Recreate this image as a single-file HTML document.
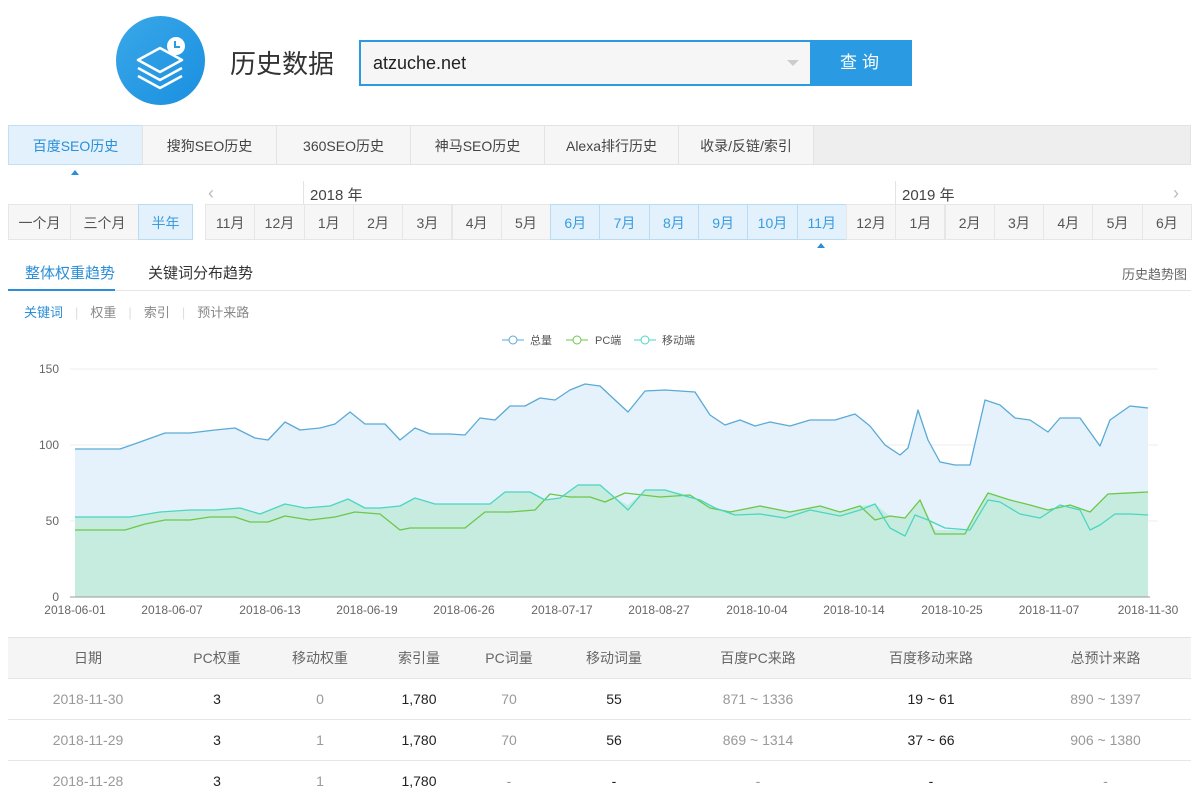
<!DOCTYPE html>
<html><head><meta charset="utf-8"><style>
*{margin:0;padding:0;box-sizing:border-box}
body{width:1200px;height:800px;overflow:hidden;background:#fff;font-family:"Liberation Sans","Noto Sans CJK SC",sans-serif;color:#555;position:relative}
.abs{position:absolute}
.logo{left:116px;top:16px;width:89px;height:89px;border-radius:50%;background:linear-gradient(135deg,#3aa8e8,#1a8fe0)}
.title{left:230px;top:44px;font-size:26px;color:#333}
.search{left:359px;top:40px;width:453px;height:46px;border:2px solid #2a9be3;background:#f6f6f6;font-size:18px;color:#222;padding:11px 0 0 12px}
.btn{left:812px;top:40px;width:100px;height:46px;background:#2a9be3;color:#fff;font-size:17px;text-align:center;line-height:46px;letter-spacing:5px}
.tabs{left:8px;top:125px;width:1183px;height:40px;background:#eee;border:1px solid #e3e3e3}
.tab{position:absolute;top:-1px;height:40px;line-height:40px;text-align:center;font-size:14px;color:#444;background:#f6f6f6;border:1px solid #e3e3e3}
.tab.on{background:#e2f1fb;color:#2a8fd8;border-color:#bfe0f5}
.cell{position:absolute;top:204px;height:36px;line-height:36px;text-align:center;font-size:14px;color:#555;background:#f6f6f6;border:1px solid #e6e6e6}
.cell.on{background:#e2f1fb;color:#3a9be0;border-color:#b9dcf3}
.tri{width:0;height:0;border-left:4px solid transparent;border-right:4px solid transparent;border-bottom:5px solid #2a8fd8}
table{position:absolute;left:8px;top:637px;width:1183px;border-collapse:collapse;font-size:14px}
td{height:41px;text-align:center;border-top:1px solid #e6e6e6;color:#999}
tr.h td{background:#f5f5f5;color:#666;border-top:1px solid #e3e3e3}
td.b{color:#222}
</style></head><body>
<div class="abs logo">
<svg width="89" height="89" viewBox="0 0 89 89"><g fill="none" stroke="#fff" stroke-width="2.5" stroke-linejoin="round"><path d="M22 44 L44 32 L66 44 L44 56 Z"/><path d="M22 52 L44 64 L66 52"/><path d="M22 60 L44 72 L66 60"/></g><circle cx="60" cy="30" r="9" fill="#fff"/><path d="M59 25 V31 H64" stroke="#2a9be3" stroke-width="2" fill="none"/></svg>
</div>
<div class="abs title">历史数据</div>
<div class="abs search">atzuche.net</div>
<div class="abs" style="left:787px;top:60px;border-left:6px solid transparent;border-right:6px solid transparent;border-top:6px solid #ccc"></div>
<div class="abs btn">查询</div>

<div class="abs tabs">
<div class="tab on" style="left:-1px;width:135px">百度SEO历史</div>
<div class="tab" style="left:133px;width:135px">搜狗SEO历史</div>
<div class="tab" style="left:267px;width:135px">360SEO历史</div>
<div class="tab" style="left:401px;width:135px">神马SEO历史</div>
<div class="tab" style="left:535px;width:135px">Alexa排行历史</div>
<div class="tab" style="left:669px;width:136px">收录/反链/索引</div>
</div>
<div class="abs tri" style="left:71px;top:170px"></div>

<div class="abs" style="left:208px;top:183px;font-size:18px;color:#bbb">‹</div>
<div class="abs" style="left:1173px;top:183px;font-size:18px;color:#bbb">›</div>
<div class="abs" style="left:303px;top:181px;width:1px;height:23px;background:#e3e3e3"></div>
<div class="abs" style="left:895px;top:181px;width:1px;height:23px;background:#e3e3e3"></div>
<div class="abs" style="left:310px;top:184px;font-size:15px;color:#444">2018 年</div>
<div class="abs" style="left:902px;top:184px;font-size:15px;color:#444">2019 年</div>

<div class="cell" style="left:8px;width:63px">一个月</div>
<div class="cell" style="left:70px;width:69px">三个月</div>
<div class="cell on" style="left:138px;width:55px">半年</div>
<div id="months"></div>
<div class="abs tri" style="left:817px;top:243px"></div>

<div class="abs" style="left:25px;top:262px;font-size:15px;color:#2a8fd8">整体权重趋势</div>
<div class="abs" style="left:148px;top:262px;font-size:15px;color:#333">关键词分布趋势</div>
<div class="abs" style="left:1122px;top:264px;font-size:13px;color:#666">历史趋势图</div>
<div class="abs" style="left:8px;top:290px;width:1183px;height:1px;background:#e6e6e6"></div>
<div class="abs" style="left:8px;top:289px;width:107px;height:2px;background:#2a8fd8"></div>
<div class="abs" style="left:24px;top:302px;font-size:13px;color:#888;word-spacing:0"><span style="color:#2a8fd8">关键词</span><span style="color:#ddd;margin:0 12px">|</span>权重<span style="color:#ddd;margin:0 12px">|</span>索引<span style="color:#ddd;margin:0 12px">|</span>预计来路</div>

<svg class="abs" style="left:0;top:320px" width="1200" height="300" viewBox="0 320 1200 300" font-family="Liberation Sans,Noto Sans CJK SC,sans-serif">
<g font-size="11" fill="#555">
<line x1="502" y1="340" x2="524" y2="340" stroke="#5aaad6"/><circle cx="513" cy="340" r="4" fill="#fff" stroke="#5aaad6"/><text x="530" y="344">总量</text>
<line x1="566" y1="340" x2="588" y2="340" stroke="#6cc74a"/><circle cx="577" cy="340" r="4" fill="#fff" stroke="#6cc74a"/><text x="595" y="344">PC端</text>
<line x1="634" y1="340" x2="656" y2="340" stroke="#4ad6c0"/><circle cx="645" cy="340" r="4" fill="#fff" stroke="#4ad6c0"/><text x="662" y="344">移动端</text>
</g>
<g stroke="#eee"><line x1="70" y1="369" x2="1158" y2="369"/><line x1="70" y1="445" x2="1158" y2="445"/><line x1="70" y1="521" x2="1158" y2="521"/></g>
<g font-size="12" fill="#666" text-anchor="end"><text x="59" y="373">150</text><text x="59" y="449">100</text><text x="59" y="525">50</text><text x="59" y="601">0</text></g>
<polygon fill="#e5f2fb" points="75,597 75,449 120,449 140,442 165,433 190,433 215,430 235,428 255,438 268,440 285,422 300,430 320,428 335,424 350,412 365,424 385,424 400,440 415,428 430,434 450,434 465,435 480,418 495,420 510,406 525,406 540,398 555,400 570,390 585,384 600,386 615,400 628,412 645,391 665,390 695,392 710,415 725,425 740,420 755,426 770,422 790,426 810,420 835,420 855,414 870,426 885,445 900,455 908,448 918,410 928,440 940,462 955,465 970,465 985,400 1000,405 1015,418 1030,420 1048,432 1060,418 1080,418 1090,432 1100,446 1110,420 1130,406 1148,408 1148,597"/>
<polygon fill="#c6ecdf" points="75,597 75,517 130,517 160,512 190,510 215,510 240,508 260,514 285,504 305,508 330,506 348,499 365,508 380,508 400,506 415,498 435,504 490,504 505,492 530,492 545,500 560,498 578,485 600,485 615,498 628,505 645,490 665,490 685,494 700,500 715,508 735,512 760,506 790,512 820,506 840,512 860,506 875,504 890,516 905,518 920,500 935,530 965,530 975,515 988,493 1010,500 1030,505 1048,510 1070,505 1090,512 1108,494 1148,492 1148,597"/>
<g fill="none" stroke-width="1.3" stroke-linejoin="round">
<polyline stroke="#5aaad6" points="75,449 120,449 140,442 165,433 190,433 215,430 235,428 255,438 268,440 285,422 300,430 320,428 335,424 350,412 365,424 385,424 400,440 415,428 430,434 450,434 465,435 480,418 495,420 510,406 525,406 540,398 555,400 570,390 585,384 600,386 615,400 628,412 645,391 665,390 695,392 710,415 725,425 740,420 755,426 770,422 790,426 810,420 835,420 855,414 870,426 885,445 900,455 908,448 918,410 928,440 940,462 955,465 970,465 985,400 1000,405 1015,418 1030,420 1048,432 1060,418 1080,418 1090,432 1100,446 1110,420 1130,406 1148,408"/>
<polyline stroke="#6cc74a" points="75,530 125,530 145,524 165,520 190,520 210,517 235,517 250,522 268,522 285,516 310,520 335,517 355,512 380,514 400,530 410,528 440,528 465,528 485,512 510,512 535,510 550,494 570,497 590,497 605,502 625,493 660,497 690,495 710,508 730,512 760,506 790,512 820,506 840,512 860,506 875,520 890,516 905,518 920,500 935,534 965,534 975,515 988,493 1010,500 1030,505 1048,510 1070,505 1090,512 1108,494 1148,492"/>
<polyline stroke="#4ad6c0" points="75,517 130,517 160,512 190,510 215,510 240,508 260,514 285,504 305,508 330,506 348,499 365,508 380,508 400,506 415,498 435,504 490,504 505,492 530,492 545,500 560,498 578,485 600,485 615,498 628,510 645,490 665,490 685,496 700,500 715,508 735,515 760,514 785,518 810,510 840,516 860,510 875,504 890,528 905,536 915,515 928,520 945,528 970,530 988,500 1000,502 1020,514 1040,518 1060,505 1080,510 1090,530 1100,525 1115,514 1130,514 1148,515"/>
</g>
<line x1="70" y1="597" x2="1150" y2="597" stroke="#999"/>
<g font-size="12" fill="#666" text-anchor="middle"><text x="75" y="614">2018-06-01</text><text x="172" y="614">2018-06-07</text><text x="270" y="614">2018-06-13</text><text x="367" y="614">2018-06-19</text><text x="464" y="614">2018-06-26</text><text x="562" y="614">2018-07-17</text><text x="659" y="614">2018-08-27</text><text x="757" y="614">2018-10-04</text><text x="854" y="614">2018-10-14</text><text x="952" y="614">2018-10-25</text><text x="1049" y="614">2018-11-07</text><text x="1148" y="614">2018-11-30</text></g>
</svg>

<table>
<tr class="h"><td style="width:160px">日期</td><td style="width:98px">PC权重</td><td style="width:108px">移动权重</td><td style="width:90px">索引量</td><td style="width:90px">PC词量</td><td style="width:120px">移动词量</td><td style="width:168px">百度PC来路</td><td style="width:178px">百度移动来路</td><td>总预计来路</td></tr>
<tr><td>2018-11-30</td><td class="b">3</td><td>0</td><td class="b">1,780</td><td>70</td><td class="b">55</td><td>871 ~ 1336</td><td class="b">19 ~ 61</td><td>890 ~ 1397</td></tr>
<tr><td>2018-11-29</td><td class="b">3</td><td>1</td><td class="b">1,780</td><td>70</td><td class="b">56</td><td>869 ~ 1314</td><td class="b">37 ~ 66</td><td>906 ~ 1380</td></tr>
<tr><td>2018-11-28</td><td class="b">3</td><td>1</td><td class="b">1,780</td><td>-</td><td class="b">-</td><td>-</td><td class="b">-</td><td>-</td></tr>
</table>
<script>
var m=["11月","12月","1月","2月","3月","4月","5月","6月","7月","8月","9月","10月","11月","12月","1月","2月","3月","4月","5月","6月"],h="";
for(var i=0;i<20;i++){var l=205+i*49.3;h+='<div class="cell'+(i>=7&&i<=12?' on':'')+'" style="left:'+l+'px;width:50.3px">'+m[i]+'</div>';}
document.getElementById("months").innerHTML=h;
</script>
</body></html>
